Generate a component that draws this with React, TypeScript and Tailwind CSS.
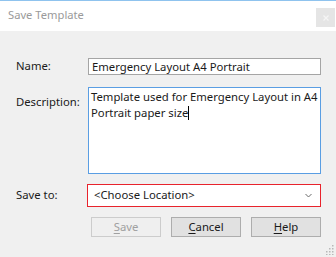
import React from "react";

const font = { fontFamily: '"Noto Sans", "Open Sans", sans-serif' };

function Mnemonic({ text, disabled }: { text: string; disabled?: boolean }) {
  return (
    <span>
      <span className={`underline underline-offset-2 ${disabled ? "decoration-[#a0a0a0]" : ""}`}>{text[0]}</span>
      {text.slice(1)}
    </span>
  );
}

export default function App() {
  return (
    <div
      className="w-[336px] h-[257px] bg-[#f0f0f0] border-t border-[#8fc3ee] text-[11.3px] text-[#1a1a1a] flex flex-col relative overflow-hidden"
      style={font}
    >
      {/* title bar */}
      <div className="h-[30px] bg-white flex items-start justify-between">
        <span className="pl-2 pt-[6px] text-[#9a9a9a] text-[11.2px]">Save Template</span>
        <button className="mt-[7px] mr-[1px] w-[19px] h-[19px] bg-[#e5e5e5] flex items-center justify-center">
          <svg width="6" height="6" viewBox="0 0 6 6">
            <path d="M0.5 0.5L5.5 5.5M5.5 0.5L0.5 5.5" stroke="#f5f5f5" strokeWidth="1.2" />
          </svg>
        </button>
      </div>

      <div className="pl-4 pt-[27px] flex flex-col">
        {/* name */}
        <div className="flex items-center h-[17px]">
          <span className="w-[72px]">Name:</span>
          <div className="w-[233px] h-[17px] bg-white border border-[#a5a5a5] pl-[3px] leading-[15px] whitespace-nowrap">
            Emergency Layout A4 Portrait
          </div>
        </div>

        {/* description */}
        <div className="flex items-start mt-[12px]">
          <span className="w-[72px] pt-[7px]">Description:</span>
          <div className="w-[233px] h-[87px] bg-white border border-[#5a9ee3] pl-[2px] pt-[1px] leading-[16px] whitespace-nowrap">
            Template used for Emergency Layout in A4
            <br />
            Portrait paper size
            <span className="inline-block w-px h-[14px] bg-black align-[-3px]" />
          </div>
        </div>

        {/* save to */}
        <div className="flex items-center mt-[10px]">
          <span className="w-[71px]">Save to:</span>
          <div className="w-[234px] h-[23px] bg-white border border-[#e8232c] pl-[6px] pr-[8px] flex items-center justify-between">
            <span>&lt;Choose Location&gt;</span>
            <svg width="7" height="5" viewBox="0 0 7 5">
              <path d="M0.5 1L3.5 4L6.5 1" fill="none" stroke="#6a6a6a" strokeWidth="1" />
            </svg>
          </div>
        </div>

        {/* buttons */}
        <div className="flex gap-[10px] mt-[10px] pl-[75px]">
          <button className="w-[70px] h-[20px] border border-[#cccccc] bg-[#efefef] text-[#a0a0a0] leading-[18px]">
            <Mnemonic text="Save" disabled />
          </button>
          <button className="w-[70px] h-[20px] border border-[#adadad] bg-[#e1e1e1] leading-[18px]">
            <Mnemonic text="Cancel" />
          </button>
          <button className="w-[70px] h-[20px] border border-[#adadad] bg-[#e1e1e1] leading-[18px]">
            <Mnemonic text="Help" />
          </button>
        </div>
      </div>

      {/* resize grip */}
      <svg className="absolute right-[2px] bottom-[2px]" width="10" height="10" viewBox="0 0 10 10">
        {[
          [8, 0], [8, 3], [5, 3], [8, 6], [5, 6], [2, 6], [8, 9], [5, 9], [2, 9],
        ].map(([x, y], i) => (
          <rect key={i} x={x} y={y} width="1.5" height="1.5" fill="#b8b8b8" />
        ))}
      </svg>
    </div>
  );
}
